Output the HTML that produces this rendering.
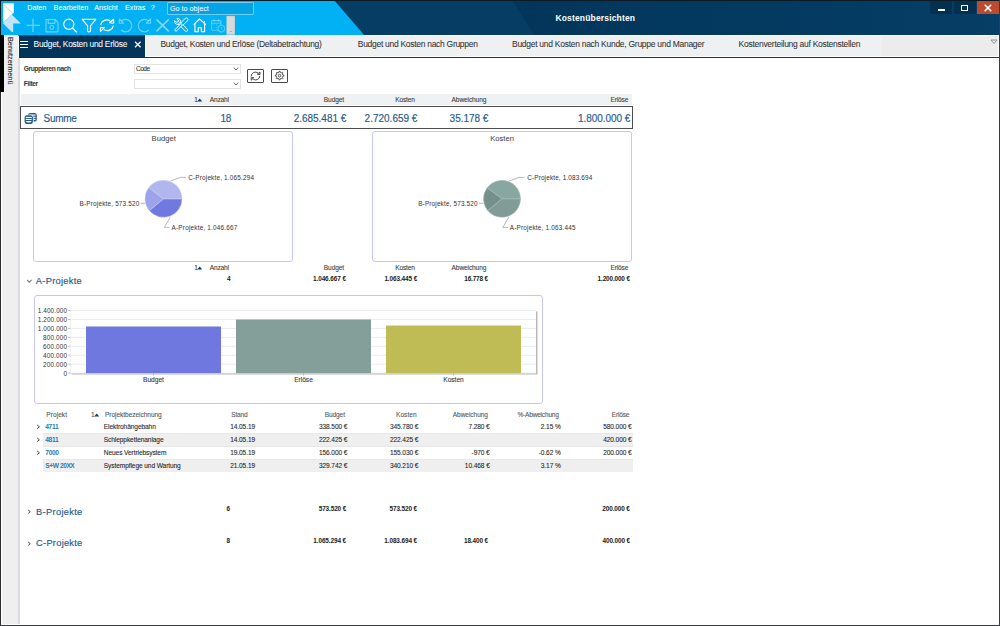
<!DOCTYPE html>
<html><head><meta charset="utf-8"><style>
html,body{margin:0;padding:0;}
body{width:1000px;height:626px;position:relative;overflow:hidden;background:#fff;font-family:"Liberation Sans", sans-serif;}
div{font-family:"Liberation Sans", sans-serif;-webkit-text-stroke:0.16px currentColor;}
</style></head><body>
<div style="position:absolute;left:0;top:0;width:1000px;height:36px;background:linear-gradient(90deg,#03355a 50%,#053e66 100%)"></div>
<svg style="position:absolute;left:0;top:0" width="1000" height="36">
<polygon points="334,0 512,0 535,36 365,36" fill="#053d65"/>
<polygon points="0,0 334,0 365,36 0,36" fill="#02b1f3"/>
<rect x="0" y="0" width="1000" height="1" fill="#0b1b26"/>
<rect x="0" y="0" width="1" height="36" fill="#0b1b26"/>
</svg>
<svg style="position:absolute;left:0;top:0" width="24" height="35">
<polygon points="3.2,3.2 13.8,3.2 13.8,12.5 11.8,14.5 3.2,22.7" fill="#ffffff"/>
<line x1="3.6" y1="4.4" x2="12.2" y2="12.6" stroke="#c9c9c9" stroke-width="0.9"/>
<polygon points="3.2,22.7 11.8,14.5 20.8,23.6 13.2,23.6 13.2,32 11.8,32 3.2,23.6" fill="#bfe6f8"/>
</svg>
<div style="position:absolute;top:3.81px;font-size:7.2px;line-height:7.2px;color:#ffffff;font-weight:normal;white-space:nowrap;-webkit-text-stroke:0.04px currentColor;left:27.2px;">Daten</div>
<div style="position:absolute;top:3.81px;font-size:7.2px;line-height:7.2px;color:#ffffff;font-weight:normal;white-space:nowrap;-webkit-text-stroke:0.04px currentColor;left:53.6px;">Bearbeiten</div>
<div style="position:absolute;top:3.81px;font-size:7.2px;line-height:7.2px;color:#ffffff;font-weight:normal;white-space:nowrap;-webkit-text-stroke:0.04px currentColor;left:94.3px;">Ansicht</div>
<div style="position:absolute;top:3.81px;font-size:7.2px;line-height:7.2px;color:#ffffff;font-weight:normal;white-space:nowrap;-webkit-text-stroke:0.04px currentColor;left:125px;">Extras</div>
<div style="position:absolute;top:3.81px;font-size:7.2px;line-height:7.2px;color:#ffffff;font-weight:normal;white-space:nowrap;-webkit-text-stroke:0.04px currentColor;left:150.8px;">?</div>
<div style="position:absolute;left:167px;top:1.6px;width:85px;height:11px;border:1px solid #6fcff4;background:#04a3e3;border-radius:1px"></div>
<div style="position:absolute;top:4.71px;font-size:7.2px;line-height:7.2px;color:#ffffff;font-weight:normal;white-space:nowrap;-webkit-text-stroke:0.04px currentColor;left:170px;">Go to object</div>
<div style="position:absolute;top:14.00px;font-size:8.5px;line-height:8.5px;color:#ffffff;font-weight:bold;white-space:nowrap;letter-spacing:0.163px;-webkit-text-stroke:0;left:555.4px;">Kostenübersichten</div>
<div style="position:absolute;left:930.3px;top:1px;width:22px;height:13px;background:#03304f;"></div>
<div style="position:absolute;left:954px;top:1px;width:21.5px;height:13px;background:#03304f;"></div>
<div style="position:absolute;left:977.1px;top:1px;width:21.8px;height:13.2px;background:#bd4a2e;"></div>
<div style="position:absolute;left:937.8px;top:9px;width:7.5px;height:1.8px;background:#ffffff;"></div>
<div style="position:absolute;left:961px;top:5px;width:5.2px;height:3.6px;border:1.2px solid #fff;border-top-width:1.7px"></div>
<svg style="position:absolute;left:983px;top:3px" width="10" height="10"><path d="M1.7,1.8 L8.2,8.1 M8.2,1.8 L1.7,8.1" stroke="#fff" stroke-width="1.5"/></svg>
<svg style="position:absolute;left:0px;top:0px" width="240" height="36">
<g fill="none" stroke-width="1.15" stroke-linejoin="round">
 <path d="M33,18.5 V32 M26.5,25.3 H40" stroke="rgba(255,255,255,0.42)" stroke-width="1.2"/>
 <path d="M46,19.5 H55.3 L58,22.3 V31.3 Q58,31.8 57.5,31.8 H46.5 Q46,31.8 46,31.3 Z M48.2,19.5 V23.3 H54.8 V19.5" stroke="rgba(255,255,255,0.42)"/>
 <circle cx="51.8" cy="27.4" r="1.9" stroke="rgba(255,255,255,0.42)"/>
 <circle cx="68.8" cy="24.2" r="5.1" stroke="#ffffff"/>
 <path d="M72.6,28 L76.8,32.2" stroke="#ffffff" stroke-width="1.25"/>
 <path d="M82.2,19.3 H95.8 L90.5,25.8 V31.2 Q89,32.6 87.6,31.2 V25.8 Z" stroke="#ffffff"/>
 <path d="M100.6,24.8 A6.3,6.3 0 0 1 110.2,21" stroke="#ffffff"/>
 <path d="M109.6,22.8 L113.6,19.3 V23.2 Z" stroke="#ffffff"/>
 <path d="M113.4,25.6 A6.3,6.3 0 0 1 103.8,29.6" stroke="#ffffff"/>
 <path d="M100.5,27.6 H104.4 L100.5,31.4 Z" stroke="#ffffff"/>
 <path d="M121.2,21.2 A6.2,6.2 0 1 1 121.2,30" stroke="rgba(255,255,255,0.42)"/>
 <path d="M119.3,19 V23.2 H123.5 Z" stroke="rgba(255,255,255,0.42)"/>
 <path d="M148.8,21.2 A6.2,6.2 0 1 0 148.8,30" stroke="rgba(255,255,255,0.42)"/>
 <path d="M150.5,19 V23.2 H146.3 Z" stroke="rgba(255,255,255,0.42)"/>
 <path d="M156.4,19.4 L168.8,31.4 M168.8,19.4 L156.4,31.4" stroke="rgba(255,255,255,0.5)" stroke-width="1.5"/>
 <path d="M179.6,24.6 L177.9,24.3 A3,3 0 0 1 174.6,20.6 L176.3,22.2 L178.1,21.9 L178.4,20.1 L176.8,18.6 A3,3 0 0 1 180.5,21.7 L180.5,23.4" stroke="#ffffff" stroke-width="0.95" fill="#02b1f3"/>
 <path d="M179.22,24.73 L185.32,31.13 A1.35,1.35 0 0 0 187.28,29.27 L181.18,22.87 A1.35,1.35 0 0 0 179.22,24.73 Z" stroke="#ffffff" stroke-width="0.95" fill="#02b1f3"/>
 <path d="M176.64,30.84 L182.74,24.74 A1.05,1.05 0 0 0 181.26,23.26 L175.16,29.36 A1.05,1.05 0 0 0 176.64,30.84 Z" stroke="#ffffff" stroke-width="0.95" fill="#02b1f3"/>
 <path d="M183.73,24.40 L187.53,20.80 A1.65,1.65 0 0 0 185.27,18.40 L181.47,22.00 A1.65,1.65 0 0 0 183.73,24.40 Z" stroke="#ffffff" stroke-width="0.95" fill="#02b1f3"/>
 <path d="M193.6,24.6 L199.6,19 L205.8,24.6 M204.3,20.9 V23.2 M194.9,23.6 V31.6 H198.2 V27.7 H201.3 V31.6 H204.6 V23.6" stroke="#ffffff"/>
 <rect x="211.6" y="20.6" width="9.4" height="9.6" rx="1" stroke="rgba(255,255,255,0.33)"/>
 <path d="M214,19.2 V21.6 M218.6,19.2 V21.6 M211.6,23.2 H221" stroke="rgba(255,255,255,0.33)"/>
 <path d="M213.6,25.2 h1 M216,25.2 h1 M213.6,27.4 h1 M216,27.4 h1" stroke="rgba(255,255,255,0.33)" stroke-width="0.9"/>
 <circle cx="221.3" cy="28.5" r="3.3" fill="#02b1f3" stroke="rgba(255,255,255,0.33)"/>
 <path d="M221.3,26.8 V28.6 L222.4,29.5" stroke="rgba(255,255,255,0.33)" stroke-width="0.8"/>
</g>
<rect x="226.9" y="16.2" width="7.6" height="18" fill="#d9d9d9" stroke="#f2d5c8" stroke-width="0.6"/>
<path d="M229.8,31 L231,32 L232.2,31" fill="none" stroke="#888" stroke-width="0.6"/>
</svg>
<div style="position:absolute;left:2px;top:35px;width:16.2px;height:589px;background:#efefef;"></div>
<div style="position:absolute;left:0px;top:35px;width:1px;height:591px;background:#2b2b2b;"></div>
<div style="position:absolute;left:0px;top:35px;width:3.6px;height:56.5px;background:#000000;"></div>
<div style="position:absolute;left:6px;top:36.5px;width:8px;height:60px;overflow:visible"><div style="position:absolute;left:0;top:0;transform-origin:0 0;transform:translate(8px,0) rotate(90deg);font-size:7.3px;line-height:8px;color:#222;white-space:nowrap;-webkit-text-stroke:0.08px #222;font-family:&quot;Liberation Sans&quot;,sans-serif">Benutzermenü</div></div>
<div style="position:absolute;left:18.2px;top:58px;width:1.4px;height:566px;background:#d9dbe3;"></div>
<div style="position:absolute;left:19px;top:35px;width:979px;height:22px;background:#eff0f2;"></div>
<div style="position:absolute;left:19px;top:35px;width:981px;height:1px;background:#fbfbfb;"></div>
<div style="position:absolute;left:19px;top:56px;width:981px;height:1px;background:#ffffff;"></div>
<div style="position:absolute;left:882px;top:36px;width:116px;height:20px;background:#ececec;"></div>
<div style="position:absolute;left:19px;top:57px;width:981px;height:1.2px;background:#0a3a5e;"></div>
<div style="position:absolute;left:19px;top:35px;width:126.4px;height:22.5px;background:#03355b;"></div>
<div style="position:absolute;left:19px;top:35px;width:126.4px;height:1px;background:#0a5888;"></div>
<div style="position:absolute;left:145.4px;top:35px;width:1.1px;height:22px;background:#ffffff;"></div>
<div style="position:absolute;left:19.6px;top:41.2px;width:8.4px;height:0.9px;background:#ffffff;"></div>
<div style="position:absolute;left:19.6px;top:44.2px;width:8.4px;height:0.9px;background:#ffffff;"></div>
<div style="position:absolute;left:19.6px;top:47.2px;width:8.4px;height:0.9px;background:#ffffff;"></div>
<div style="position:absolute;top:40.39px;font-size:8.4px;line-height:8.4px;color:#ffffff;font-weight:normal;white-space:nowrap;letter-spacing:-0.247px;-webkit-text-stroke:0.04px currentColor;left:33.6px;">Budget, Kosten und Erlöse</div>
<svg style="position:absolute;left:134px;top:40.9px" width="8" height="7"><path d="M1,0.8 L6.6,6.2 M6.6,0.8 L1,6.2" stroke="#fff" stroke-width="1.2"/></svg>
<div style="position:absolute;top:40.30px;font-size:8.5px;line-height:8.5px;color:#2e2e2e;font-weight:normal;white-space:nowrap;letter-spacing:-0.288px;-webkit-text-stroke:0.04px currentColor;left:160.4px;">Budget, Kosten und Erlöse (Deltabetrachtung)</div>
<div style="position:absolute;top:40.30px;font-size:8.5px;line-height:8.5px;color:#2e2e2e;font-weight:normal;white-space:nowrap;letter-spacing:-0.291px;-webkit-text-stroke:0.04px currentColor;left:357.8px;">Budget und Kosten nach Gruppen</div>
<div style="position:absolute;top:40.30px;font-size:8.5px;line-height:8.5px;color:#2e2e2e;font-weight:normal;white-space:nowrap;letter-spacing:-0.276px;-webkit-text-stroke:0.04px currentColor;left:512px;">Budget und Kosten nach Kunde, Gruppe und Manager</div>
<div style="position:absolute;top:40.30px;font-size:8.5px;line-height:8.5px;color:#2e2e2e;font-weight:normal;white-space:nowrap;letter-spacing:-0.276px;-webkit-text-stroke:0.04px currentColor;left:738.6px;">Kostenverteilung auf Kostenstellen</div>
<svg style="position:absolute;left:990px;top:39px" width="8" height="6"><path d="M1,1 H7 L4,4.5 Z" fill="none" stroke="#8a8a8a" stroke-width="0.9"/></svg>
<div style="position:absolute;top:66.01px;font-size:6.6px;line-height:6.6px;color:#333;font-weight:bold;white-space:nowrap;letter-spacing:-0.401px;-webkit-text-stroke:0;left:23.8px;">Gruppieren nach</div>
<div style="position:absolute;top:80.81px;font-size:6.6px;line-height:6.6px;color:#333;font-weight:bold;white-space:nowrap;letter-spacing:-0.347px;-webkit-text-stroke:0;left:23.8px;">Filter</div>
<div style="position:absolute;left:134px;top:64.3px;width:104.5px;height:7.5px;border:1px solid #e3e3e3;background:#fff"></div>
<svg style="position:absolute;left:233px;top:67px" width="6" height="4"><path d="M0.8,0.6 L3,3 L5.2,0.6" fill="none" stroke="#555" stroke-width="0.9"/></svg>
<div style="position:absolute;left:134px;top:79.3px;width:104.5px;height:7.5px;border:1px solid #e3e3e3;background:#fff"></div>
<svg style="position:absolute;left:233px;top:82px" width="6" height="4"><path d="M0.8,0.6 L3,3 L5.2,0.6" fill="none" stroke="#555" stroke-width="0.9"/></svg>
<div style="position:absolute;top:66.01px;font-size:6.6px;line-height:6.6px;color:#333;font-weight:normal;white-space:nowrap;letter-spacing:-0.493px;-webkit-text-stroke:0.08px currentColor;left:135.9px;">Code</div>
<div style="position:absolute;left:247px;top:69px;width:15px;height:11.8px;border:1px solid #4a4a4a;border-radius:1px;background:#fff"></div>
<div style="position:absolute;left:271px;top:69px;width:15px;height:11.8px;border:1px solid #4a4a4a;border-radius:1px;background:#fff"></div>
<svg style="position:absolute;left:247px;top:69px" width="17" height="14"><g fill="none" stroke="#333" stroke-width="0.9" stroke-linejoin="round"><path d="M4.2,7.4 A4.2,4.2 0 0 1 11,4"/><path d="M10.4,5.2 L13,3 V5.6 Z"/><path d="M12.8,7 A4.2,4.2 0 0 1 6.2,10.2"/><path d="M4.2,8.6 H6.8 L4.2,11.2 Z"/></g></svg>
<svg style="position:absolute;left:271px;top:69px" width="17" height="14"><g fill="none" stroke="#3a3a3a" stroke-width="0.85" stroke-linejoin="round"><path d="M11.72,5.90 L12.87,6.06 L12.87,7.14 L11.72,7.30 L11.30,8.31 L12.00,9.24 L11.24,10.00 L10.31,9.30 L9.30,9.72 L9.14,10.87 L8.06,10.87 L7.90,9.72 L6.89,9.30 L5.96,10.00 L5.20,9.24 L5.90,8.31 L5.48,7.30 L4.33,7.14 L4.33,6.06 L5.48,5.90 L5.90,4.89 L5.20,3.96 L5.96,3.20 L6.89,3.90 L7.90,3.48 L8.06,2.33 L9.14,2.33 L9.30,3.48 L10.31,3.90 L11.24,3.20 L12.00,3.96 L11.30,4.89 Z"/><circle cx="8.6" cy="6.6" r="1.3"/></g></svg>
<div style="position:absolute;left:20.5px;top:94px;width:611.8px;height:11px;background:#f0f1f3;"></div>
<div style="position:absolute;top:97.21px;font-size:6.6px;line-height:6.6px;color:#3a3a3a;font-weight:normal;white-space:nowrap;letter-spacing:-1.871px;-webkit-text-stroke:0.08px currentColor;left:194.2px;">1</div>
<svg style="position:absolute;left:196.79999999999998px;top:98px" width="6" height="4"><path d="M0.2,3.6 L2.7,0.6 L5.2,3.6 Z" fill="#0b3d66"/></svg>
<div style="position:absolute;top:97.21px;font-size:6.6px;line-height:6.6px;color:#3a3a3a;font-weight:normal;white-space:nowrap;letter-spacing:-0.196px;-webkit-text-stroke:0.08px currentColor;left:209.8px;">Anzahl</div>
<div style="position:absolute;top:97.21px;font-size:6.6px;line-height:6.6px;color:#3a3a3a;font-weight:normal;white-space:nowrap;letter-spacing:-0.104px;-webkit-text-stroke:0.08px currentColor;left:323.8px;">Budget</div>
<div style="position:absolute;top:97.21px;font-size:6.6px;line-height:6.6px;color:#3a3a3a;font-weight:normal;white-space:nowrap;letter-spacing:-0.15px;-webkit-text-stroke:0.08px currentColor;left:395.2px;">Kosten</div>
<div style="position:absolute;top:97.21px;font-size:6.6px;line-height:6.6px;color:#3a3a3a;font-weight:normal;white-space:nowrap;letter-spacing:-0.129px;-webkit-text-stroke:0.08px currentColor;left:451.6px;">Abweichung</div>
<div style="position:absolute;top:97.21px;font-size:6.6px;line-height:6.6px;color:#3a3a3a;font-weight:normal;white-space:nowrap;letter-spacing:-0.142px;-webkit-text-stroke:0.08px currentColor;left:610.4px;">Erlöse</div>
<div style="position:absolute;left:20px;top:105.8px;width:610.6px;height:20.8px;border:1.2px solid #4d4d4d"></div>
<svg style="position:absolute;left:0px;top:100px" width="45" height="30" viewBox="0 100 45 30">
<rect x="28" y="113" width="8.8" height="8.6" rx="2.2" fill="#285b8b"/>
<rect x="29.3" y="114.5" width="6.2" height="1.1" fill="#fff"/>
<rect x="33.6" y="116.7" width="1.9" height="1.1" fill="#fff"/>
<rect x="33.6" y="118.8" width="1.9" height="1.1" fill="#fff"/>
<rect x="24" y="114.7" width="9.6" height="9.6" rx="2.4" fill="#fff"/>
<rect x="24.6" y="115.3" width="8.3" height="8.6" rx="2.2" fill="#285b8b"/>
<rect x="25.8" y="116.9" width="5.9" height="1.1" fill="#fff"/>
<rect x="25.8" y="118.9" width="5.9" height="1.1" fill="#fff"/>
<path d="M25.8,121 H31.7 Q31.2,122.5 28.75,122.5 Q26.3,122.5 25.8,121 Z" fill="#fff"/>
</svg>
<div style="position:absolute;top:114.33px;font-size:10px;line-height:10px;color:#285b8b;font-weight:normal;white-space:nowrap;letter-spacing:-0.314px;left:43.6px;">Summe</div>
<div style="position:absolute;top:113.73px;font-size:10px;line-height:10px;color:#285b8b;font-weight:normal;white-space:nowrap;letter-spacing:-0.323px;right:768.9234375px;text-align:right;">18</div>
<div style="position:absolute;top:113.73px;font-size:10px;line-height:10px;color:#285b8b;font-weight:normal;white-space:nowrap;letter-spacing:-0.043px;right:653.8428125px;text-align:right;">2.685.481 €</div>
<div style="position:absolute;top:113.73px;font-size:10px;line-height:10px;color:#285b8b;font-weight:normal;white-space:nowrap;letter-spacing:-0.003px;right:582.6028125px;text-align:right;">2.720.659 €</div>
<div style="position:absolute;top:113.73px;font-size:10px;line-height:10px;color:#285b8b;font-weight:normal;white-space:nowrap;letter-spacing:-0.018px;right:511.6180803571429px;text-align:right;">35.178 €</div>
<div style="position:absolute;top:113.73px;font-size:10px;line-height:10px;color:#285b8b;font-weight:normal;white-space:nowrap;letter-spacing:-0.043px;right:369.6428125px;text-align:right;">1.800.000 €</div>
<div style="position:absolute;left:33.4px;top:130.6px;width:258px;height:129.8px;border:1px solid #c5c8f3;border-radius:3px"></div>
<div style="position:absolute;left:372px;top:130.6px;width:258px;height:129.8px;border:1px solid #c5c8f3;border-radius:3px"></div>
<div style="position:absolute;top:135.37px;font-size:7.6px;line-height:7.6px;color:#444;font-weight:normal;white-space:nowrap;letter-spacing:0.062px;-webkit-text-stroke:0.04px currentColor;left:151.6px;">Budget</div>
<div style="position:absolute;top:135.37px;font-size:7.6px;line-height:7.6px;color:#444;font-weight:normal;white-space:nowrap;letter-spacing:0.028px;-webkit-text-stroke:0.04px currentColor;left:490.2px;">Kosten</div>
<svg style="position:absolute;left:0;top:0" width="700" height="300"><path d="M163.5,198.8 L182.00,198.80 A18.5,18.5 0 0 1 149.26,210.61 Z" fill="#6f79df" stroke="#c9cdf5" stroke-width="0.5"/><path d="M163.5,198.8 L149.26,210.61 A18.5,18.5 0 0 1 148.76,187.62 Z" fill="#9ca3ea" stroke="#c9cdf5" stroke-width="0.5"/><path d="M163.5,198.8 L148.76,187.62 A18.5,18.5 0 0 1 182.00,198.80 Z" fill="#b1b6ef" stroke="#c9cdf5" stroke-width="0.5"/><path d="M170.3,181.10000000000002 L180.5,177.4 H186.0 M140.5,203.3 H145.0 M170.3,217.20000000000002 L164.3,227.4 H169.7" fill="none" stroke="#9a9a9a" stroke-width="0.7"/><path d="M502,198.8 L520.50,198.80 A18.5,18.5 0 0 1 487.68,210.51 Z" fill="#819b96" stroke="#a6bcb8" stroke-width="0.5"/><path d="M502,198.8 L487.68,210.51 A18.5,18.5 0 0 1 487.15,187.77 Z" fill="#758f8a" stroke="#a6bcb8" stroke-width="0.5"/><path d="M502,198.8 L487.15,187.77 A18.5,18.5 0 0 1 520.50,198.80 Z" fill="#89a7a1" stroke="#a6bcb8" stroke-width="0.5"/><path d="M508.8,181.10000000000002 L519,177.4 H524.5 M479,203.3 H483.5 M508.8,217.20000000000002 L502.8,227.4 H508.2" fill="none" stroke="#9a9a9a" stroke-width="0.7"/></svg>
<div style="position:absolute;top:174.88px;font-size:6.4px;line-height:6.4px;color:#333;font-weight:normal;white-space:nowrap;letter-spacing:0.182px;-webkit-text-stroke:0;left:188.2px;">C-Projekte, 1.065.294</div>
<div style="position:absolute;top:200.98px;font-size:6.4px;line-height:6.4px;color:#333;font-weight:normal;white-space:nowrap;letter-spacing:0.179px;-webkit-text-stroke:0;left:79.6px;">B-Projekte, 573.520</div>
<div style="position:absolute;top:225.18px;font-size:6.4px;line-height:6.4px;color:#333;font-weight:normal;white-space:nowrap;letter-spacing:0.195px;-webkit-text-stroke:0;left:171.6px;">A-Projekte, 1.046.667</div>
<div style="position:absolute;top:174.88px;font-size:6.4px;line-height:6.4px;color:#333;font-weight:normal;white-space:nowrap;letter-spacing:0.147px;-webkit-text-stroke:0;left:527.2px;">C-Projekte, 1.083.694</div>
<div style="position:absolute;top:200.98px;font-size:6.4px;line-height:6.4px;color:#333;font-weight:normal;white-space:nowrap;letter-spacing:0.157px;-webkit-text-stroke:0;left:418.2px;">B-Projekte, 573.520</div>
<div style="position:absolute;top:225.18px;font-size:6.4px;line-height:6.4px;color:#333;font-weight:normal;white-space:nowrap;letter-spacing:0.195px;-webkit-text-stroke:0;left:509.8px;">A-Projekte, 1.063.445</div>
<div style="position:absolute;top:265.21px;font-size:6.6px;line-height:6.6px;color:#3a3a3a;font-weight:normal;white-space:nowrap;letter-spacing:-1.871px;-webkit-text-stroke:0.08px currentColor;left:194.2px;">1</div>
<svg style="position:absolute;left:196.79999999999998px;top:266px" width="6" height="4"><path d="M0.2,3.6 L2.7,0.6 L5.2,3.6 Z" fill="#0b3d66"/></svg>
<div style="position:absolute;top:265.21px;font-size:6.6px;line-height:6.6px;color:#3a3a3a;font-weight:normal;white-space:nowrap;letter-spacing:-0.196px;-webkit-text-stroke:0.08px currentColor;left:209.8px;">Anzahl</div>
<div style="position:absolute;top:265.21px;font-size:6.6px;line-height:6.6px;color:#3a3a3a;font-weight:normal;white-space:nowrap;letter-spacing:-0.104px;-webkit-text-stroke:0.08px currentColor;left:323.8px;">Budget</div>
<div style="position:absolute;top:265.21px;font-size:6.6px;line-height:6.6px;color:#3a3a3a;font-weight:normal;white-space:nowrap;letter-spacing:-0.15px;-webkit-text-stroke:0.08px currentColor;left:395.2px;">Kosten</div>
<div style="position:absolute;top:265.21px;font-size:6.6px;line-height:6.6px;color:#3a3a3a;font-weight:normal;white-space:nowrap;letter-spacing:-0.129px;-webkit-text-stroke:0.08px currentColor;left:451.6px;">Abweichung</div>
<div style="position:absolute;top:265.21px;font-size:6.6px;line-height:6.6px;color:#3a3a3a;font-weight:normal;white-space:nowrap;letter-spacing:-0.142px;-webkit-text-stroke:0.08px currentColor;left:610.4px;">Erlöse</div>
<svg style="position:absolute;left:26px;top:279px" width="7" height="5"><path d="M1,0.9 L3.3,3.3 L5.6,0.9" fill="none" stroke="#888" stroke-width="1.3"/></svg>
<div style="position:absolute;top:277.13px;font-size:9.3px;line-height:9.3px;color:#285b8b;font-weight:normal;white-space:nowrap;letter-spacing:0.287px;left:35.8px;">A-Projekte</div>
<div style="position:absolute;top:276.18px;font-size:6.4px;line-height:6.4px;color:#1a1a1a;font-weight:bold;white-space:nowrap;letter-spacing:0.44px;-webkit-text-stroke:0;left:227px;">4</div>
<div style="position:absolute;top:276.18px;font-size:6.4px;line-height:6.4px;color:#1a1a1a;font-weight:bold;white-space:nowrap;letter-spacing:-0.081px;-webkit-text-stroke:0;left:313px;">1.046.667 €</div>
<div style="position:absolute;top:276.18px;font-size:6.4px;line-height:6.4px;color:#1a1a1a;font-weight:bold;white-space:nowrap;letter-spacing:-0.091px;-webkit-text-stroke:0;left:384.4px;">1.063.445 €</div>
<div style="position:absolute;top:276.18px;font-size:6.4px;line-height:6.4px;color:#1a1a1a;font-weight:bold;white-space:nowrap;letter-spacing:-0.173px;-webkit-text-stroke:0;left:464.3px;">16.778 €</div>
<div style="position:absolute;top:276.18px;font-size:6.4px;line-height:6.4px;color:#1a1a1a;font-weight:bold;white-space:nowrap;letter-spacing:-0.141px;-webkit-text-stroke:0;left:597.6px;">1.200.000 €</div>
<div style="position:absolute;left:33.8px;top:295.2px;width:507.6px;height:107px;border:1px solid #c5c8f3;border-radius:3px"></div>
<svg style="position:absolute;left:0;top:290px" width="560" height="110" viewBox="0 290 560 110"><rect x="71.5" y="311.5" width="466" height="63" fill="#b9b9b9"/><rect x="70.5" y="310.4" width="465.5" height="62.7" fill="#fff"/><rect x="70.5" y="310.00" width="465.5" height="0.8" fill="#e6e6e6"/><rect x="68.2" y="310.05" width="2.3" height="0.7" fill="#999"/><rect x="70.5" y="318.96" width="465.5" height="0.8" fill="#e6e6e6"/><rect x="68.2" y="319.01" width="2.3" height="0.7" fill="#999"/><rect x="70.5" y="327.91" width="465.5" height="0.8" fill="#e6e6e6"/><rect x="68.2" y="327.96" width="2.3" height="0.7" fill="#999"/><rect x="70.5" y="336.87" width="465.5" height="0.8" fill="#e6e6e6"/><rect x="68.2" y="336.92" width="2.3" height="0.7" fill="#999"/><rect x="70.5" y="345.83" width="465.5" height="0.8" fill="#e6e6e6"/><rect x="68.2" y="345.88" width="2.3" height="0.7" fill="#999"/><rect x="70.5" y="354.79" width="465.5" height="0.8" fill="#e6e6e6"/><rect x="68.2" y="354.83" width="2.3" height="0.7" fill="#999"/><rect x="70.5" y="363.74" width="465.5" height="0.8" fill="#e6e6e6"/><rect x="68.2" y="363.79" width="2.3" height="0.7" fill="#999"/><rect x="70.5" y="372.70" width="465.5" height="0.8" fill="#e6e6e6"/><rect x="68.2" y="372.75" width="2.3" height="0.7" fill="#999"/><rect x="70.3" y="310.4" width="0.7" height="62.7" fill="#ececec"/><rect x="86" y="326.5" width="135" height="46.60000000000002" fill="#6f78de"/><rect x="236" y="319.5" width="135" height="53.60000000000002" fill="#849e99"/><rect x="386" y="325.5" width="135" height="47.60000000000002" fill="#bfbb55"/><rect x="153.2" y="373.5" width="0.6" height="2" fill="#999"/><rect x="303.2" y="373.5" width="0.6" height="2" fill="#999"/><rect x="453.2" y="373.5" width="0.6" height="2" fill="#999"/></svg>
<div style="position:absolute;top:307.98px;font-size:6.4px;line-height:6.4px;color:#333;font-weight:normal;white-space:nowrap;letter-spacing:0.103px;-webkit-text-stroke:0;right:932.8965625px;text-align:right;">1.400.000</div>
<div style="position:absolute;top:316.94px;font-size:6.4px;line-height:6.4px;color:#333;font-weight:normal;white-space:nowrap;letter-spacing:0.103px;-webkit-text-stroke:0;right:932.8965625px;text-align:right;">1.200.000</div>
<div style="position:absolute;top:325.90px;font-size:6.4px;line-height:6.4px;color:#333;font-weight:normal;white-space:nowrap;letter-spacing:0.103px;-webkit-text-stroke:0;right:932.8965625px;text-align:right;">1.000.000</div>
<div style="position:absolute;top:334.85px;font-size:6.4px;line-height:6.4px;color:#333;font-weight:normal;white-space:nowrap;letter-spacing:0.144px;-webkit-text-stroke:0;right:932.8558333333333px;text-align:right;">800.000</div>
<div style="position:absolute;top:343.81px;font-size:6.4px;line-height:6.4px;color:#333;font-weight:normal;white-space:nowrap;letter-spacing:0.144px;-webkit-text-stroke:0;right:932.8558333333333px;text-align:right;">600.000</div>
<div style="position:absolute;top:352.77px;font-size:6.4px;line-height:6.4px;color:#333;font-weight:normal;white-space:nowrap;letter-spacing:0.144px;-webkit-text-stroke:0;right:932.8558333333333px;text-align:right;">400.000</div>
<div style="position:absolute;top:361.72px;font-size:6.4px;line-height:6.4px;color:#333;font-weight:normal;white-space:nowrap;letter-spacing:0.144px;-webkit-text-stroke:0;right:932.8558333333333px;text-align:right;">200.000</div>
<div style="position:absolute;top:370.68px;font-size:6.4px;line-height:6.4px;color:#333;font-weight:normal;white-space:nowrap;letter-spacing:-0.16px;-webkit-text-stroke:0;right:933.1595px;text-align:right;">0</div>
<div style="position:absolute;top:377.21px;font-size:6.6px;line-height:6.6px;color:#333;font-weight:normal;white-space:nowrap;-webkit-text-stroke:0.08px currentColor;left:-146.5px;width:600px;text-align:center;">Budget</div>
<div style="position:absolute;top:377.21px;font-size:6.6px;line-height:6.6px;color:#333;font-weight:normal;white-space:nowrap;-webkit-text-stroke:0.08px currentColor;left:3.5px;width:600px;text-align:center;">Erlöse</div>
<div style="position:absolute;top:377.21px;font-size:6.6px;line-height:6.6px;color:#333;font-weight:normal;white-space:nowrap;-webkit-text-stroke:0.08px currentColor;left:153.5px;width:600px;text-align:center;">Kosten</div>
<div style="position:absolute;top:411.91px;font-size:6.6px;line-height:6.6px;color:#555;font-weight:normal;white-space:nowrap;letter-spacing:0.026px;-webkit-text-stroke:0.08px currentColor;left:46.3px;">Projekt</div>
<div style="position:absolute;top:411.91px;font-size:6.6px;line-height:6.6px;color:#555;font-weight:normal;white-space:nowrap;letter-spacing:-1.871px;-webkit-text-stroke:0.08px currentColor;left:91px;">1</div>
<svg style="position:absolute;left:93.6px;top:412.7px" width="6" height="4"><path d="M0.2,3.6 L2.7,0.6 L5.2,3.6 Z" fill="#0b3d66"/></svg>
<div style="position:absolute;top:411.91px;font-size:6.6px;line-height:6.6px;color:#555;font-weight:normal;white-space:nowrap;letter-spacing:-0.069px;-webkit-text-stroke:0.08px currentColor;left:105px;">Projektbezeichnung</div>
<div style="position:absolute;top:411.91px;font-size:6.6px;line-height:6.6px;color:#555;font-weight:normal;white-space:nowrap;letter-spacing:-0.162px;-webkit-text-stroke:0.08px currentColor;left:231.2px;">Stand</div>
<div style="position:absolute;top:411.91px;font-size:6.6px;line-height:6.6px;color:#555;font-weight:normal;white-space:nowrap;letter-spacing:-0.144px;-webkit-text-stroke:0.08px currentColor;left:324.8px;">Budget</div>
<div style="position:absolute;top:411.91px;font-size:6.6px;line-height:6.6px;color:#555;font-weight:normal;white-space:nowrap;letter-spacing:0.01px;-webkit-text-stroke:0.08px currentColor;left:396px;">Kosten</div>
<div style="position:absolute;top:411.91px;font-size:6.6px;line-height:6.6px;color:#555;font-weight:normal;white-space:nowrap;letter-spacing:-0.084px;-webkit-text-stroke:0.08px currentColor;left:452.8px;">Abweichung</div>
<div style="position:absolute;top:411.91px;font-size:6.6px;line-height:6.6px;color:#555;font-weight:normal;white-space:nowrap;letter-spacing:-0.221px;-webkit-text-stroke:0.08px currentColor;left:517.4px;">%-Abweichung</div>
<div style="position:absolute;top:411.91px;font-size:6.6px;line-height:6.6px;color:#555;font-weight:normal;white-space:nowrap;letter-spacing:-0.182px;-webkit-text-stroke:0.08px currentColor;left:611.7px;">Erlöse</div>
<div style="position:absolute;left:43px;top:433px;width:590px;height:13.3px;background:#efefef;"></div>
<div style="position:absolute;left:43px;top:459.3px;width:590px;height:12.7px;background:#efefef;"></div>
<div style="position:absolute;left:43px;top:445.8px;width:590px;height:0.8px;background:#e6e6e6;"></div>
<div style="position:absolute;left:43px;top:432.8px;width:590px;height:0.7px;background:#e8e8e8;"></div>
<div style="position:absolute;left:43px;top:459.2px;width:590px;height:0.6px;background:#e9e9e9;"></div>
<svg style="position:absolute;left:35.5px;top:423.70px" width="5" height="6"><path d="M1.1,0.9 L3.4,2.8 L1.1,4.7" fill="none" stroke="#3a3a3a" stroke-width="0.95"/></svg>
<div style="position:absolute;top:423.51px;font-size:6.6px;line-height:6.6px;color:#2a7cb6;font-weight:bold;white-space:nowrap;letter-spacing:-0.34px;-webkit-text-stroke:0;left:45.3px;">4711</div>
<div style="position:absolute;top:423.51px;font-size:6.6px;line-height:6.6px;color:#1e1e1e;font-weight:normal;white-space:nowrap;letter-spacing:-0.1px;-webkit-text-stroke:0.08px currentColor;left:103.8px;">Elektrohängebahn</div>
<div style="position:absolute;top:423.51px;font-size:6.6px;line-height:6.6px;color:#1e1e1e;font-weight:normal;white-space:nowrap;letter-spacing:-0.1px;-webkit-text-stroke:0.08px currentColor;left:230.2px;">14.05.19</div>
<div style="position:absolute;top:423.51px;font-size:6.6px;line-height:6.6px;color:#1e1e1e;font-weight:normal;white-space:nowrap;letter-spacing:-0.1px;-webkit-text-stroke:0.08px currentColor;right:652.7px;text-align:right;">338.500 €</div>
<div style="position:absolute;top:423.51px;font-size:6.6px;line-height:6.6px;color:#1e1e1e;font-weight:normal;white-space:nowrap;letter-spacing:-0.1px;-webkit-text-stroke:0.08px currentColor;right:581.7px;text-align:right;">345.780 €</div>
<div style="position:absolute;top:423.51px;font-size:6.6px;line-height:6.6px;color:#1e1e1e;font-weight:normal;white-space:nowrap;letter-spacing:-0.1px;-webkit-text-stroke:0.08px currentColor;right:510.29999999999995px;text-align:right;">7.280 €</div>
<div style="position:absolute;top:423.51px;font-size:6.6px;line-height:6.6px;color:#1e1e1e;font-weight:normal;white-space:nowrap;letter-spacing:-0.1px;-webkit-text-stroke:0.08px currentColor;right:439.29999999999995px;text-align:right;">2.15 %</div>
<div style="position:absolute;top:423.51px;font-size:6.6px;line-height:6.6px;color:#1e1e1e;font-weight:normal;white-space:nowrap;letter-spacing:-0.1px;-webkit-text-stroke:0.08px currentColor;right:368.4px;text-align:right;">580.000 €</div>
<svg style="position:absolute;left:35.5px;top:436.80px" width="5" height="6"><path d="M1.1,0.9 L3.4,2.8 L1.1,4.7" fill="none" stroke="#3a3a3a" stroke-width="0.95"/></svg>
<div style="position:absolute;top:436.61px;font-size:6.6px;line-height:6.6px;color:#2a7cb6;font-weight:bold;white-space:nowrap;letter-spacing:-0.34px;-webkit-text-stroke:0;left:45.3px;">4811</div>
<div style="position:absolute;top:436.61px;font-size:6.6px;line-height:6.6px;color:#1e1e1e;font-weight:normal;white-space:nowrap;letter-spacing:-0.1px;-webkit-text-stroke:0.08px currentColor;left:103.8px;">Schleppkettenanlage</div>
<div style="position:absolute;top:436.61px;font-size:6.6px;line-height:6.6px;color:#1e1e1e;font-weight:normal;white-space:nowrap;letter-spacing:-0.1px;-webkit-text-stroke:0.08px currentColor;left:230.2px;">14.05.19</div>
<div style="position:absolute;top:436.61px;font-size:6.6px;line-height:6.6px;color:#1e1e1e;font-weight:normal;white-space:nowrap;letter-spacing:-0.1px;-webkit-text-stroke:0.08px currentColor;right:652.7px;text-align:right;">222.425 €</div>
<div style="position:absolute;top:436.61px;font-size:6.6px;line-height:6.6px;color:#1e1e1e;font-weight:normal;white-space:nowrap;letter-spacing:-0.1px;-webkit-text-stroke:0.08px currentColor;right:581.7px;text-align:right;">222.425 €</div>
<div style="position:absolute;top:436.61px;font-size:6.6px;line-height:6.6px;color:#1e1e1e;font-weight:normal;white-space:nowrap;letter-spacing:-0.1px;-webkit-text-stroke:0.08px currentColor;right:368.4px;text-align:right;">420.000 €</div>
<svg style="position:absolute;left:35.5px;top:449.90px" width="5" height="6"><path d="M1.1,0.9 L3.4,2.8 L1.1,4.7" fill="none" stroke="#3a3a3a" stroke-width="0.95"/></svg>
<div style="position:absolute;top:449.71px;font-size:6.6px;line-height:6.6px;color:#2a7cb6;font-weight:bold;white-space:nowrap;letter-spacing:-0.328px;-webkit-text-stroke:0;left:45.3px;">7000</div>
<div style="position:absolute;top:449.71px;font-size:6.6px;line-height:6.6px;color:#1e1e1e;font-weight:normal;white-space:nowrap;letter-spacing:-0.1px;-webkit-text-stroke:0.08px currentColor;left:103.8px;">Neues Vertriebsystem</div>
<div style="position:absolute;top:449.71px;font-size:6.6px;line-height:6.6px;color:#1e1e1e;font-weight:normal;white-space:nowrap;letter-spacing:-0.1px;-webkit-text-stroke:0.08px currentColor;left:230.2px;">19.05.19</div>
<div style="position:absolute;top:449.71px;font-size:6.6px;line-height:6.6px;color:#1e1e1e;font-weight:normal;white-space:nowrap;letter-spacing:-0.1px;-webkit-text-stroke:0.08px currentColor;right:652.7px;text-align:right;">156.000 €</div>
<div style="position:absolute;top:449.71px;font-size:6.6px;line-height:6.6px;color:#1e1e1e;font-weight:normal;white-space:nowrap;letter-spacing:-0.1px;-webkit-text-stroke:0.08px currentColor;right:581.7px;text-align:right;">155.030 €</div>
<div style="position:absolute;top:449.71px;font-size:6.6px;line-height:6.6px;color:#1e1e1e;font-weight:normal;white-space:nowrap;letter-spacing:-0.1px;-webkit-text-stroke:0.08px currentColor;right:510.29999999999995px;text-align:right;">-970 €</div>
<div style="position:absolute;top:449.71px;font-size:6.6px;line-height:6.6px;color:#1e1e1e;font-weight:normal;white-space:nowrap;letter-spacing:-0.1px;-webkit-text-stroke:0.08px currentColor;right:439.29999999999995px;text-align:right;">-0.62 %</div>
<div style="position:absolute;top:449.71px;font-size:6.6px;line-height:6.6px;color:#1e1e1e;font-weight:normal;white-space:nowrap;letter-spacing:-0.1px;-webkit-text-stroke:0.08px currentColor;right:368.4px;text-align:right;">200.000 €</div>
<div style="position:absolute;top:462.81px;font-size:6.6px;line-height:6.6px;color:#2a7cb6;font-weight:bold;white-space:nowrap;letter-spacing:-0.424px;-webkit-text-stroke:0;left:45.3px;">S+W 20XX</div>
<div style="position:absolute;top:462.81px;font-size:6.6px;line-height:6.6px;color:#1e1e1e;font-weight:normal;white-space:nowrap;letter-spacing:-0.1px;-webkit-text-stroke:0.08px currentColor;left:103.8px;">Systempflege und Wartung</div>
<div style="position:absolute;top:462.81px;font-size:6.6px;line-height:6.6px;color:#1e1e1e;font-weight:normal;white-space:nowrap;letter-spacing:-0.1px;-webkit-text-stroke:0.08px currentColor;left:230.2px;">21.05.19</div>
<div style="position:absolute;top:462.81px;font-size:6.6px;line-height:6.6px;color:#1e1e1e;font-weight:normal;white-space:nowrap;letter-spacing:-0.1px;-webkit-text-stroke:0.08px currentColor;right:652.7px;text-align:right;">329.742 €</div>
<div style="position:absolute;top:462.81px;font-size:6.6px;line-height:6.6px;color:#1e1e1e;font-weight:normal;white-space:nowrap;letter-spacing:-0.1px;-webkit-text-stroke:0.08px currentColor;right:581.7px;text-align:right;">340.210 €</div>
<div style="position:absolute;top:462.81px;font-size:6.6px;line-height:6.6px;color:#1e1e1e;font-weight:normal;white-space:nowrap;letter-spacing:-0.1px;-webkit-text-stroke:0.08px currentColor;right:510.29999999999995px;text-align:right;">10.468 €</div>
<div style="position:absolute;top:462.81px;font-size:6.6px;line-height:6.6px;color:#1e1e1e;font-weight:normal;white-space:nowrap;letter-spacing:-0.1px;-webkit-text-stroke:0.08px currentColor;right:439.29999999999995px;text-align:right;">3.17 %</div>
<svg style="position:absolute;left:26.5px;top:509.10px" width="5" height="6"><path d="M1.1,0.9 L3.3,2.7 L1.1,4.5" fill="none" stroke="#3a3a3a" stroke-width="0.9"/></svg>
<div style="position:absolute;top:508.03px;font-size:9.3px;line-height:9.3px;color:#285b8b;font-weight:normal;white-space:nowrap;letter-spacing:0.309px;left:36.1px;">B-Projekte</div>
<div style="position:absolute;top:505.88px;font-size:6.4px;line-height:6.4px;color:#1a1a1a;font-weight:bold;white-space:nowrap;-webkit-text-stroke:0;right:769.9px;text-align:right;">6</div>
<div style="position:absolute;top:505.88px;font-size:6.4px;line-height:6.4px;color:#1a1a1a;font-weight:bold;white-space:nowrap;letter-spacing:-0.1px;-webkit-text-stroke:0;right:653.8px;text-align:right;">573.520 €</div>
<div style="position:absolute;top:505.88px;font-size:6.4px;line-height:6.4px;color:#1a1a1a;font-weight:bold;white-space:nowrap;letter-spacing:-0.1px;-webkit-text-stroke:0;right:583px;text-align:right;">573.520 €</div>
<div style="position:absolute;top:505.88px;font-size:6.4px;line-height:6.4px;color:#1a1a1a;font-weight:bold;white-space:nowrap;letter-spacing:-0.1px;-webkit-text-stroke:0;right:370.20000000000005px;text-align:right;">200.000 €</div>
<svg style="position:absolute;left:26.5px;top:540.50px" width="5" height="6"><path d="M1.1,0.9 L3.3,2.7 L1.1,4.5" fill="none" stroke="#3a3a3a" stroke-width="0.9"/></svg>
<div style="position:absolute;top:539.43px;font-size:9.3px;line-height:9.3px;color:#285b8b;font-weight:normal;white-space:nowrap;letter-spacing:0.252px;left:36.1px;">C-Projekte</div>
<div style="position:absolute;top:538.08px;font-size:6.4px;line-height:6.4px;color:#1a1a1a;font-weight:bold;white-space:nowrap;-webkit-text-stroke:0;right:769.9px;text-align:right;">8</div>
<div style="position:absolute;top:538.08px;font-size:6.4px;line-height:6.4px;color:#1a1a1a;font-weight:bold;white-space:nowrap;letter-spacing:-0.1px;-webkit-text-stroke:0;right:654px;text-align:right;">1.065.294 €</div>
<div style="position:absolute;top:538.08px;font-size:6.4px;line-height:6.4px;color:#1a1a1a;font-weight:bold;white-space:nowrap;letter-spacing:-0.1px;-webkit-text-stroke:0;right:583px;text-align:right;">1.083.694 €</div>
<div style="position:absolute;top:538.08px;font-size:6.4px;line-height:6.4px;color:#1a1a1a;font-weight:bold;white-space:nowrap;letter-spacing:-0.1px;-webkit-text-stroke:0;right:512px;text-align:right;">18.400 €</div>
<div style="position:absolute;top:538.08px;font-size:6.4px;line-height:6.4px;color:#1a1a1a;font-weight:bold;white-space:nowrap;letter-spacing:-0.1px;-webkit-text-stroke:0;right:370px;text-align:right;">400.000 €</div>
<div style="position:absolute;left:999px;top:0px;width:1px;height:626px;background:#3a3b40;"></div>
<div style="position:absolute;left:0px;top:624.8px;width:1000px;height:1.2px;background:#3a3b40;"></div>
</body></html>
